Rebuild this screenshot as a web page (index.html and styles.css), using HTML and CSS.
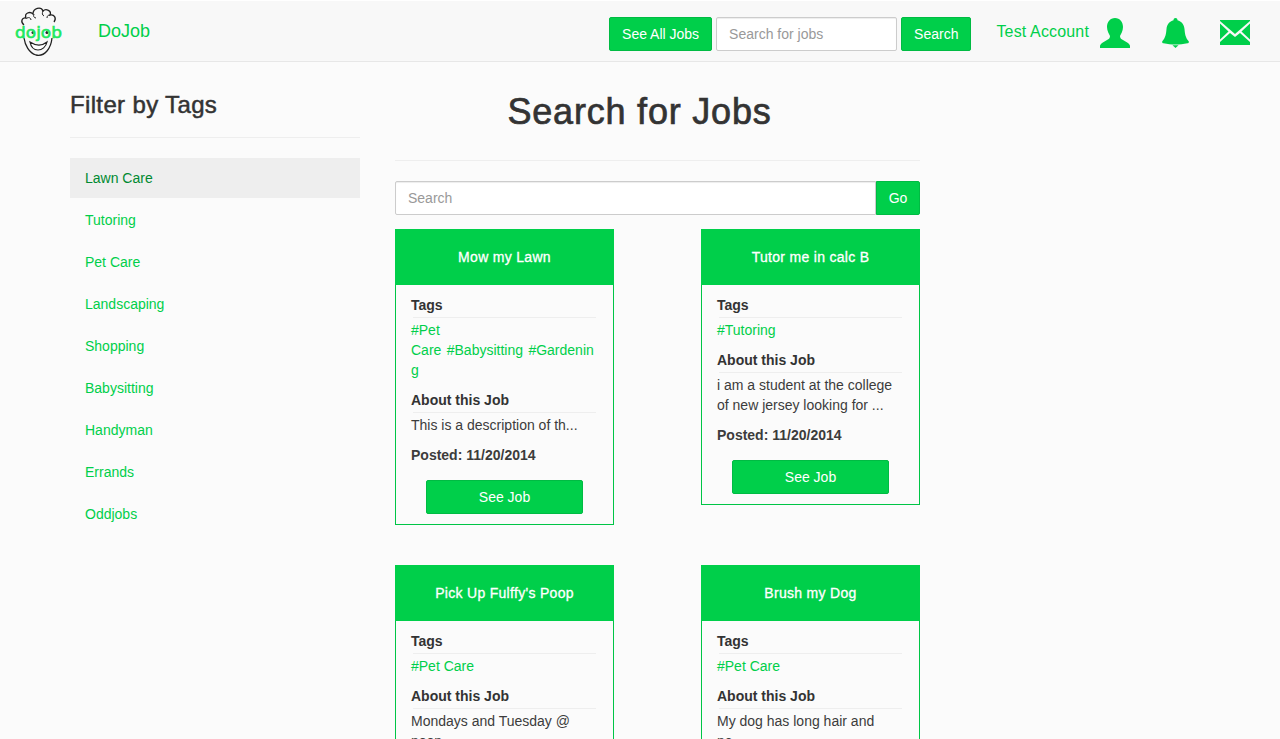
FILE: index.html
```html
<!DOCTYPE html>
<html lang="en">
<head>
  <meta charset="UTF-8">
  <meta name="viewport" content="width=device-width, initial-scale=1.0">
  <title>DoJob</title>
  <link rel="stylesheet" href="styles.css">
</head>
<body>
  <nav class="navbar">
    <svg class="logo" width="50" height="52" viewBox="0 0 50 52" fill="none">
      <path d="M10 20C6 17 8 12 12 13 10 8 16 6 19 9 19 3 27 1 29 6 32 3 38 6 36 10 40 9 43 13 40 17" stroke="#222" stroke-width="1.3"/>
      <path d="M13 13c2-1 4 0 4 2M20 9c-1 2 0 4 2 4M29 6c-1 2-1 4 1 5M36 10c-2 0-3 1-3 3" stroke="#222" stroke-width="1"/>
      <path d="M10 33C11 40 15 48 22 50 31 52 37 43 38 33" stroke="#222" stroke-width="1.3"/>
      <path d="M16 37C22 41 28 41 33 37 32 42 28 45 24 45 20 45 17 42 16 37z" stroke="#222" stroke-width="1.2" fill="#fff"/>
      <circle cx="19" cy="27.500" r="1.500" fill="#222"/>
      <circle cx="33" cy="27.500" r="1.500" fill="#222"/>
      <text class="logo-text" x="1" y="33" textLength="47" lengthAdjust="spacingAndGlyphs">dojob</text>
    </svg>
    <a class="brand" href="#">DoJob</a>
    <div class="nav-right">
      <a class="btn" href="#">See All Jobs</a>
      <input class="field nav-search" type="text" placeholder="Search for jobs">
      <a class="btn" href="#">Search</a>
      <a class="account" href="#">Test Account</a>
      <svg class="icon-user" width="30" height="30" viewBox="0 0 30 30" fill="#00cf4a">
        <path d="M15 0C20 0 23 4 23 9 23 13 21 16 20 18 20 20 21 21 23 22L28 25C29 26 30 27 30 28V30H0V28C0 27 1 26 2 25L7 22C9 21 10 20 10 18 9 16 7 13 7 9 7 4 10 0 15 0Z"/>
      </svg>
      <svg class="icon-bell" width="27" height="30" viewBox="0 0 27 30" fill="#00cf4a">
        <path d="M13.500 0C14.700 0 15.500.8 15.500 2.300 19.500 3.300 22 6.500 22.500 11 23 16.500 23.500 19.500 26.500 23 27.300 24 26.800 25 25.500 25.300 21.500 26.200 17.500 26.500 13.500 26.500S5.500 26.200 1.500 25.300C.2 25-.3 24 .5 23 3.500 19.500 4 16.500 4.500 11 5 6.500 7.500 3.300 11.500 2.300 11.500.8 12.300 0 13.500 0Z"/>
        <path d="M10.500 27.300h6L13.500 30z"/>
      </svg>
      <svg class="icon-mail" width="30" height="25" viewBox="0 0 30 25" fill="#00cf4a">
        <path d="M0 0H30V1L15 14 0 1Z"/>
        <path d="M0 3.500V19.500L8.500 11.500ZM30 3.500V19.500L21.500 11.500Z"/>
        <path d="M0 25H30V22L20 13 15 17 10 13 0 22Z"/>
      </svg>
    </div>
  </nav>

  <div class="page">
    <aside class="sidebar">
      <h3 class="side-title">Filter by Tags</h3>
      <ul class="tag-list">
        <li class="tag-item active"><a href="#">Lawn Care</a></li>
        <li class="tag-item"><a href="#">Tutoring</a></li>
        <li class="tag-item"><a href="#">Pet Care</a></li>
        <li class="tag-item"><a href="#">Landscaping</a></li>
        <li class="tag-item"><a href="#">Shopping</a></li>
        <li class="tag-item"><a href="#">Babysitting</a></li>
        <li class="tag-item"><a href="#">Handyman</a></li>
        <li class="tag-item"><a href="#">Errands</a></li>
        <li class="tag-item"><a href="#">Oddjobs</a></li>
      </ul>
    </aside>

    <main class="main">
      <h1 class="page-title">Search for Jobs</h1>
      <div class="search-row">
        <input class="field main-search" type="text" placeholder="Search">
        <a class="btn go" href="#">Go</a>
      </div>
      <div class="cards">
        <div class="card">
          <div class="card-head">Mow my Lawn</div>
          <div class="card-body">
            <h5>Tags</h5>
            <p class="tags tags-many"><a href="#">#Pet Care&nbsp;#Babysitting&nbsp;#Gardening</a></p>
            <h5>About this Job</h5>
            <p>This is a description of th...</p>
            <p class="posted">Posted: 11/20/2014</p>
            <a class="btn see-job" href="#">See Job</a>
          </div>
        </div>
        <div class="card">
          <div class="card-head">Tutor me in calc B</div>
          <div class="card-body">
            <h5>Tags</h5>
            <p class="tags"><a href="#">#Tutoring</a></p>
            <h5>About this Job</h5>
            <p>i am a student at the college of new jersey looking for ...</p>
            <p class="posted">Posted: 11/20/2014</p>
            <a class="btn see-job" href="#">See Job</a>
          </div>
        </div>
        <div class="card">
          <div class="card-head">Pick Up Fulffy's Poop</div>
          <div class="card-body">
            <h5>Tags</h5>
            <p class="tags"><a href="#">#Pet Care</a></p>
            <h5>About this Job</h5>
            <p>Mondays and Tuesday @ noon</p>
            <p class="posted">Posted: 11/20/2014</p>
            <a class="btn see-job" href="#">See Job</a>
          </div>
        </div>
        <div class="card">
          <div class="card-head">Brush my Dog</div>
          <div class="card-body">
            <h5>Tags</h5>
            <p class="tags"><a href="#">#Pet Care</a></p>
            <h5>About this Job</h5>
            <p>My dog has long hair and ne...</p>
            <p class="posted">Posted: 11/20/2014</p>
            <a class="btn see-job" href="#">See Job</a>
          </div>
        </div>
      </div>
    </main>
  </div>
</body>
</html>
```

FILE: styles.css
```css
* {
  box-sizing: border-box;
}

html, body {
  height: 739px;
  overflow: hidden;
}

body {
  margin: 0;
  font-family: "Liberation Sans", Arial, sans-serif;
  font-size: 14px;
  line-height: 20px;
  color: #333;
  background: #fbfbfb;
}

a {
  color: #00cf4a;
  text-decoration: none;
}

.navbar {
  display: flex;
  align-items: center;
  height: 62px;
  padding: 0 30px 0 14px;
  background: #f8f8f8;
  border-top: 1px solid #fff;
  border-bottom: 1px solid #e7e7e7;
}

.logo-text {
  font-family: "DejaVu Sans", sans-serif;
  font-size: 15px;
  fill: #1ee860;
  stroke: #1ee860;
  stroke-width: .6px;
}

.brand {
  margin-left: 34px;
  margin-top: -1px;
  font-size: 18px;
}

.nav-right {
  display: flex;
  align-items: center;
  margin-left: auto;
  padding-top: 6px;
}

.btn {
  display: block;
  height: 34px;
  padding: 6px 12px;
  color: #fff;
  text-align: center;
  background: #00cf4a;
  border: 1px solid #00bb43;
  border-radius: 2px;
}

.field {
  height: 34px;
  padding: 6px 12px;
  font-family: inherit;
  font-size: 14px;
  color: #555;
  background: #fff;
  border: 1px solid #ccc;
  border-radius: 2px;
  box-shadow: inset 0 1px 1px rgba(0, 0, 0, .075);
}

.field::placeholder {
  color: #999;
}

.nav-search {
  width: 181px;
  margin: 0 4px;
}

.account {
  margin-left: 25px;
  margin-top: -4px;
  font-size: 16px;
  letter-spacing: .15px;
}

.icon-user {
  margin-left: 11px;
  margin-top: -3px;
}

.icon-bell {
  margin-left: 32px;
  margin-top: -3px;
}

.icon-mail {
  margin-left: 31px;
  margin-top: -3px;
}

.page {
  display: flex;
  align-items: flex-start;
  padding-left: 70px;
}

.sidebar {
  width: 290px;
  margin-right: 35px;
}

.side-title {
  margin: 0;
  padding: 28px 0 17px;
  font-size: 24px;
  font-weight: normal;
  line-height: 30px;
  letter-spacing: .35px;
  -webkit-text-stroke: .5px #333;
  border-bottom: 1px solid #eee;
}

.tag-list {
  margin: 20px 0 0;
  padding: 0;
  list-style: none;
}

.tag-item {
  margin-bottom: 2px;
}

.tag-item a {
  display: block;
  height: 40px;
  padding: 10px 15px;
}

.tag-item.active a {
  color: #008a31;
  background: #eee;
}

.main {
  width: 525px;
}

.page-title {
  margin: 0;
  padding: 27px 0 26px;
  font-size: 36px;
  font-weight: normal;
  line-height: 45px;
  letter-spacing: .8px;
  -webkit-text-stroke: .7px #333;
  text-align: center;
  transform: translateX(-18px);
}

.search-row {
  display: flex;
  padding-top: 20px;
  border-top: 1px solid #eee;
}

.main-search {
  flex: 1;
  border-radius: 2px 0 0 2px;
}

.go {
  width: 44px;
  padding: 6px 0;
  border-radius: 0 2px 2px 0;
}

.cards {
  display: grid;
  grid-template-columns: 219px 219px;
  justify-content: space-between;
  align-items: start;
  row-gap: 40px;
  margin-top: 14px;
}

.card {
  background: #fbfbfb;
  border: 1px solid #00c546;
}

.card-head {
  height: 56px;
  margin: -1px -1px 0;
  padding-top: 18px;
  color: #fff;
  letter-spacing: .3px;
  -webkit-text-stroke: .3px #fff;
  text-align: center;
  background: #00cf4a;
}

.card-body {
  padding: 10px 17px 10px 15px;
  overflow-wrap: anywhere;
}

.card-body h5 {
  margin: 0 0 2px 2px;
  padding-bottom: 2px;
  font-size: 14px;
  line-height: 20px;
  font-weight: bold;
  text-indent: -2px;
  border-bottom: 1px solid #eee;
}

.card-body p {
  margin: 0 0 5px;
  color: #3c3c3c;
}

.card-body .tags {
  margin-bottom: 10px;
}

.card-body .tags-many {
  word-spacing: 1.500px;
}

.card-body .posted {
  margin: 10px 0 15px;
  font-weight: bold;
}

.see-job {
  width: 157px;
  margin: 0 0 0 15px;
}
```
